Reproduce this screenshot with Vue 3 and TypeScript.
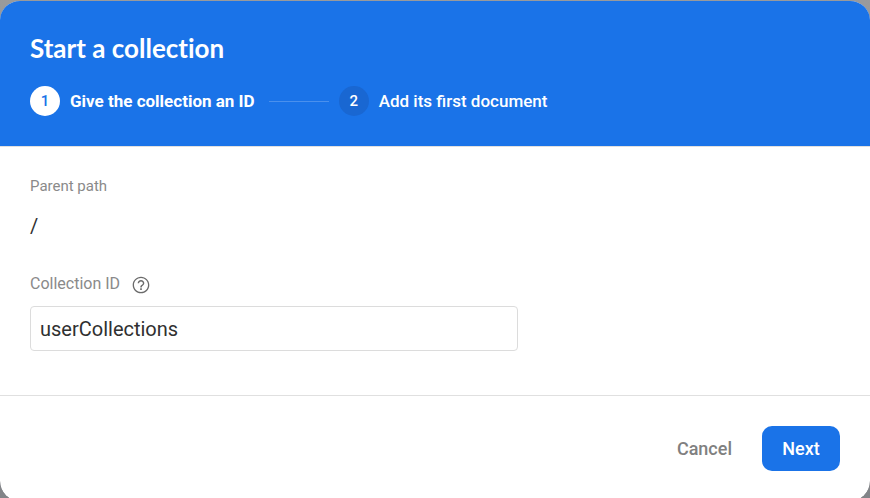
<script setup lang="ts">
import { ref } from 'vue'

interface Step {
  number: number
  label: string
}

const steps: Step[] = [
  { number: 1, label: 'Give the collection an ID' },
  { number: 2, label: 'Add its first document' },
]
const activeStep = ref(1)
const collectionId = ref('userCollections')
</script>

<template>
  <main class="dialog">
    <header class="header">
      <h1 class="title">Start a collection</h1>
      <ol class="steps">
        <li v-for="step in steps" :key="step.number" class="step" :class="{ active: step.number === activeStep }">
          <span class="badge">{{ step.number }}</span>
          <span class="step-label">{{ step.label }}</span>
        </li>
      </ol>
    </header>
    <form id="collection-form" class="body" @submit.prevent>
      <p class="label">Parent path</p>
      <p class="path">/</p>
      <div class="label-row">
        <label class="label field-label" for="collection-id">Collection ID</label>
        <svg class="help" viewBox="0 0 24 24" aria-hidden="true">
          <path d="M11 18h2v-2h-2v2zm1-16C6.48 2 2 6.48 2 12s4.480 10 10 10 10-4.480 10-10S17.520 2 12 2zm0 18.400c-4.640 0-8.400-3.760-8.400-8.400s3.760-8.400 8.400-8.400 8.400 3.760 8.400 8.400-3.760 8.400-8.400 8.400zm0-14.400c-2.210 0-4 1.790-4 4h1.700c0-1.270 1.030-2.300 2.300-2.300s2.300 1.030 2.300 2.300c0 2-3.150 1.750-3.150 5h1.700c0-2.250 3.150-2.500 3.150-5 0-2.210-1.790-4-4-4z" />
        </svg>
      </div>
      <input id="collection-id" v-model="collectionId" class="input" type="text" />
    </form>
    <footer class="footer">
      <button class="button" type="button">Cancel</button>
      <button class="button primary" type="submit" form="collection-form">Next</button>
    </footer>
  </main>
</template>

<style>
html {
  overflow: hidden;
}
body {
  background: linear-gradient(#999a9c, #828488);
}
</style>

<style scoped>
.dialog {
  display: flex;
  flex-direction: column;
  min-height: calc(100vh + 3px);
  box-sizing: border-box;
  overflow: hidden;
  border-top: 1px solid transparent;
  border-radius: 20px;
  background: #fff;
  background-clip: padding-box;
  color: #303030;
  font-family: Roboto, sans-serif;
}
.header {
  padding: 31px 30px 30px;
  background: #1a73e8;
  color: #fff;
}
.title {
  margin: 0;
  font: 700 26px/32px "Google Sans", Lato, sans-serif;
  font-variant-ligatures: none;
}
.steps {
  display: flex;
  align-items: center;
  margin: 22px 0 0;
  padding: 0;
  list-style: none;
}
.step {
  display: flex;
  align-items: center;
  gap: 10px;
  font-size: 17px;
  line-height: 30px;
}
.step + .step::before {
  width: 60px;
  height: 1px;
  margin-left: 14px;
  background: #4a90ed;
  content: "";
}
.badge {
  width: 30px;
  border-radius: 50%;
  background: #1967d2;
  font-size: 15px;
  font-weight: 500;
  text-align: center;
}
.active .badge {
  background: #fff;
  color: #1a73e8;
}
.step-label {
  font-weight: 500;
}
.active .step-label {
  font-weight: 700;
}
.body {
  flex: 1;
  padding: 29px 30px 30px;
  border-top: 1px solid #e0e0e0;
}
.label {
  margin: 0;
  color: #8a8a8a;
  font-size: 15px;
  line-height: 20px;
}
.path {
  margin: 16px 0 33px;
  font-size: 20px;
  line-height: 28px;
}
.label-row {
  display: flex;
  align-items: flex-end;
  gap: 11px;
}
.field-label {
  font-size: 16px;
  line-height: 22px;
}
.help {
  width: 20px;
  height: 20px;
  fill: #6b6b6b;
}
.input {
  display: block;
  width: 100%;
  max-width: 488px;
  height: 45px;
  box-sizing: border-box;
  margin-top: 11px;
  padding: 0 9px;
  border: 1px solid #dcdcdc;
  border-radius: 4px;
  color: inherit;
  font: 20px Roboto, sans-serif;
}
.footer {
  display: flex;
  justify-content: flex-end;
  gap: 10px;
  padding: 30px;
  border-top: 1px solid #e0e0e0;
}
.button {
  min-width: 78px;
  height: 45px;
  padding: 0 20px;
  border: 0;
  border-radius: 10px;
  background: transparent;
  color: #808080;
  font: 500 18px Roboto, sans-serif;
}
.primary {
  background: #1a73e8;
  color: #fff;
}
</style>
